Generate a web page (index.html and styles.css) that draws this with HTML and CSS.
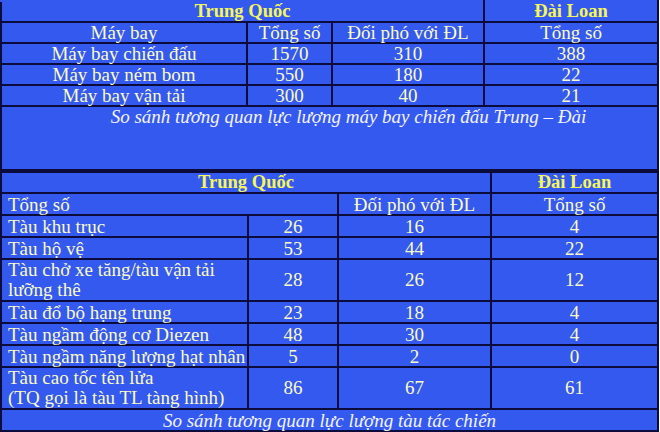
FILE: index.html
```html
<!DOCTYPE html>
<html lang="vi">
<head>
<meta charset="utf-8">
<link rel="stylesheet" href="styles.css">
</head>
<body>
<table class="grid t1">
  <colgroup><col class="c1"><col class="c2"><col class="c3"><col class="c4"></colgroup>
  <tr class="hdr"><th colspan="3">Trung Quốc</th><th>Đài Loan</th></tr>
  <tr><td>Máy bay</td><td>Tổng số</td><td>Đối phó với ĐL</td><td>Tổng số</td></tr>
  <tr><td>Máy bay chiến đấu</td><td>1570</td><td>310</td><td>388</td></tr>
  <tr><td>Máy bay ném bom</td><td>550</td><td>180</td><td>22</td></tr>
  <tr><td>Máy bay vận tải</td><td>300</td><td>40</td><td>21</td></tr>
  <tr class="cap1"><td colspan="4">So sánh tương quan lực lượng máy bay chiến đấu Trung – Đài</td></tr>
</table>
<table class="grid t2">
  <colgroup><col class="d1"><col class="d2"><col class="d3"><col class="d4"></colgroup>
  <tr class="hdr"><th colspan="3">Trung Quốc</th><th>Đài Loan</th></tr>
  <tr><td colspan="2" class="left">Tổng số</td><td>Đối phó với ĐL</td><td>Tổng số</td></tr>
  <tr><td class="left">Tàu khu trục</td><td>26</td><td>16</td><td>4</td></tr>
  <tr><td class="left">Tàu hộ vệ</td><td>53</td><td>44</td><td>22</td></tr>
  <tr class="two"><td class="left">Tàu chở xe tăng/tàu vận tải<br>lưỡng thê</td><td>28</td><td>26</td><td>12</td></tr>
  <tr><td class="left">Tàu đổ bộ hạng trung</td><td>23</td><td>18</td><td>4</td></tr>
  <tr><td class="left">Tàu ngầm động cơ Diezen</td><td>48</td><td>30</td><td>4</td></tr>
  <tr><td class="left">Tàu ngầm năng lượng hạt nhân</td><td>5</td><td>2</td><td>0</td></tr>
  <tr class="two"><td class="left">Tàu cao tốc tên lửa<br>(TQ gọi là tàu TL tàng hình)</td><td>86</td><td>67</td><td>61</td></tr>
  <tr class="cap2"><td colspan="4">So sánh tương quan lực lượng tàu tác chiến</td></tr>
</table>
</body>
</html>
```
FILE: styles.css
```css
html, body {
  margin: 0;
  padding: 0;
  background: #ffffff;
}
body {
  font-family: "Liberation Serif", "Times New Roman", serif;
}
.grid {
  border-collapse: collapse;
  table-layout: fixed;
  width: 657px;
  background: #3459ee;
  color: #fbfbc8;
  font-size: 19px;
  line-height: 19px;
}
.grid th, .grid td {
  border: 2px solid #0b0b3c;
  padding: 0;
  text-align: center;
  vertical-align: middle;
  height: 19px;
}
.grid tr.hdr th {
  color: #f6f65a;
  font-weight: bold;
  font-size: 18.5px;
}
.t1 .c1 { width: 246px; }
.t1 .c2 { width: 85px; }
.t1 .c3 { width: 152px; }
.t1 .c4 { width: 174px; }
.t2 .d1 { width: 247px; }
.t2 .d2 { width: 90px; }
.t2 .d3 { width: 153px; }
.t2 .d4 { width: 167px; }
.t1 tr.hdr th { border-top-color: #3459ee; }
.grid td.left {
  text-align: left;
  padding-left: 6px;
}
.grid tr.two td {
  height: 40px;
  line-height: 20px;
}
.t2 tr td { height: 20px; }
.t2 tr.two td { height: 40px; }
.cap1 td {
  height: 62px;
  vertical-align: top;
  font-style: italic;
  color: #f4f4ff;
  padding-left: 38px;
}
.cap2 td {
  font-style: italic;
  color: #f4f4ff;
}
```
